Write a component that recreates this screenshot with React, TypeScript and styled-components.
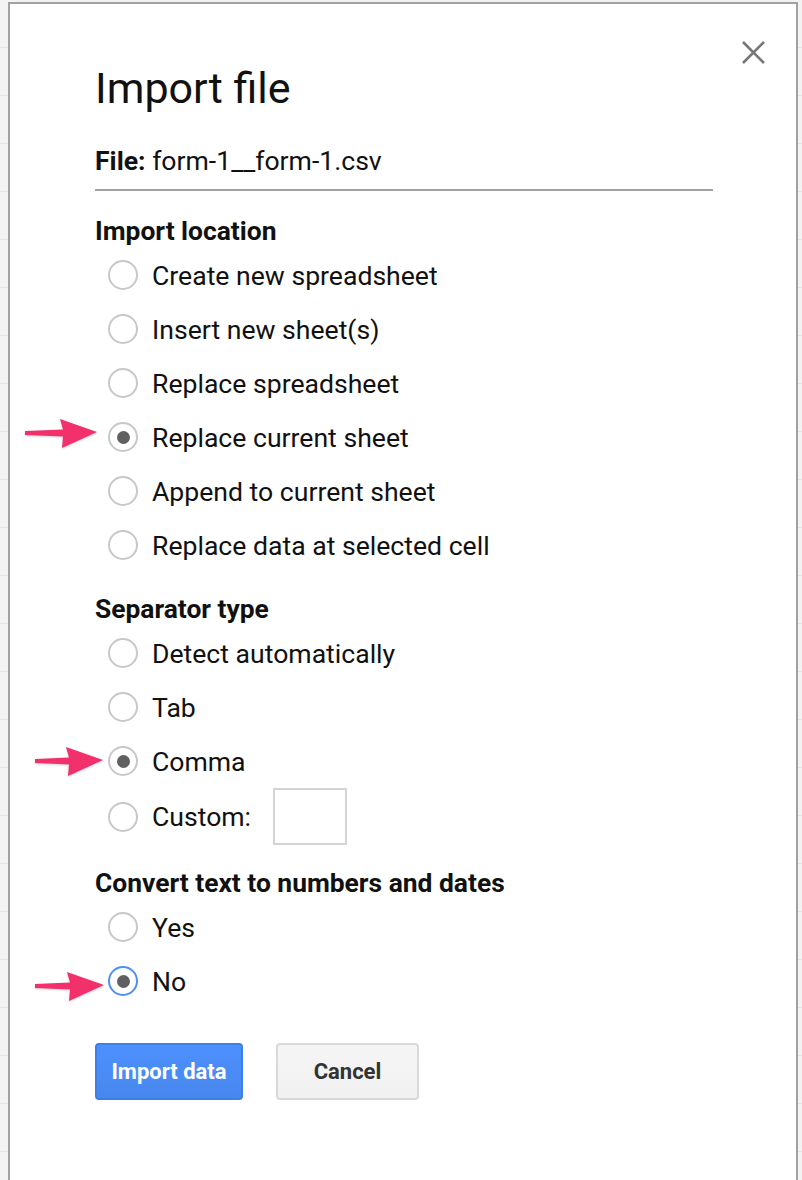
import React, { useState } from "react";
import styled, { createGlobalStyle } from "styled-components";

const GlobalStyle = createGlobalStyle`
  html, body {
    margin: 0;
    padding: 0;
  }
  body {
    background-color: #f3f3f3;
    background-image: repeating-linear-gradient(
      to bottom,
      transparent 0,
      transparent 47px,
      #e3e3e3 47px,
      #e3e3e3 48px
    );
    font-family: Roboto, "Liberation Sans", Arial, sans-serif;
    color: #111;
    overflow: hidden;
  }
`;

const Page = styled.div`
  height: 1180px;
  padding: 2px 4px 0 8px;
  box-sizing: border-box;
`;

const Dialog = styled.div`
  position: relative;
  width: 790px;
  min-height: 1180px;
  box-sizing: border-box;
  background: #fff;
  border: 2px solid #a2a2a2;
  border-bottom: none;
  padding: 60px 0 0 85px;
`;

const CloseButton = styled.button`
  position: absolute;
  top: 37px;
  right: 31px;
  width: 23px;
  height: 23px;
  padding: 0;
  border: none;
  background: none;
  cursor: pointer;
`;

const Title = styled.h1`
  margin: 0;
  font-size: 43px;
  line-height: 48px;
  font-weight: 400;
  color: #111;
`;

const FileLine = styled.div`
  margin-top: 34px;
  width: 618px;
  font-size: 26.6px;
  line-height: 30px;
  padding-bottom: 13px;
  border-bottom: 2px solid #a2a2a2;
  b {
    font-weight: 700;
  }
`;

const SectionTitle = styled.div<{ $gap: number }>`
  margin-top: ${(p) => p.$gap}px;
  margin-bottom: 2px;
  font-size: 26.4px;
  line-height: 30px;
  font-weight: 700;
`;

const Row = styled.label`
  position: relative;
  display: flex;
  align-items: center;
  min-height: 54px;
  padding-left: 13px;
  gap: 14px;
  font-size: 26.6px;
  cursor: pointer;
`;

const Circle = styled.span<{ $checked: boolean; $focused?: boolean }>`
  width: 30px;
  height: 30px;
  box-sizing: border-box;
  border-radius: 50%;
  border: 2px solid ${(p) => (p.$focused ? "#4d8ff5" : "#c8c8c8")};
  display: grid;
  place-items: center;
  flex-shrink: 0;
  &::after {
    content: "";
    width: 13px;
    height: 13px;
    border-radius: 50%;
    background: #606060;
    display: ${(p) => (p.$checked ? "block" : "none")};
  }
`;

const CustomBox = styled.input`
  margin-left: 8px;
  width: 74px;
  height: 57px;
  box-sizing: border-box;
  border: 2px solid #d4d4d4;
  outline: none;
`;

const ArrowMark = styled.svg<{ $left: number; $top: number }>`
  position: absolute;
  left: ${(p) => p.$left}px;
  top: ${(p) => p.$top}px;
  filter: drop-shadow(0 1px 1px rgba(0, 0, 0, 0.18));
`;

const Buttons = styled.div`
  display: flex;
  gap: 33px;
  margin-top: 35px;
`;

const Button = styled.button<{ $primary?: boolean }>`
  height: 57px;
  width: ${(p) => (p.$primary ? 148 : 143)}px;
  border-radius: 4px;
  font-family: Roboto, "Liberation Sans", Arial, sans-serif;
  font-size: 22px;
  font-weight: 700;
  cursor: pointer;
  border: 2px solid ${(p) => (p.$primary ? "#3b7fe8" : "#d9d9d9")};
  background: ${(p) =>
    p.$primary
      ? "linear-gradient(#4d90fe, #4787ed)"
      : "linear-gradient(#f5f5f5, #f1f1f1)"};
  color: ${(p) => (p.$primary ? "#fff" : "#333")};
`;

const Arrow = ({ left, top, w }: { left: number; top: number; w: number }) => (
  <ArrowMark $left={left} $top={top} width={w} height="30" viewBox={`0 0 ${w} 30`}>
    <path
      d={`M0 12 L${w - 34} 10.5 L${w - 37} 0 L${w} 13 L${w - 35} 29 L${w - 34} 17.5 L0 16 Z`}
      fill="#f2306b"
    />
  </ArrowMark>
);

type Opt = { label: string; arrow?: { left: number; top: number; w: number } };

const locations: Opt[] = [
  { label: "Create new spreadsheet" },
  { label: "Insert new sheet(s)" },
  { label: "Replace spreadsheet" },
  { label: "Replace current sheet", arrow: { left: -70, top: 9, w: 72 } },
  { label: "Append to current sheet" },
  { label: "Replace data at selected cell" },
];

const separators: Opt[] = [
  { label: "Detect automatically" },
  { label: "Tab" },
  { label: "Comma", arrow: { left: -60, top: 13, w: 68 } },
];

const converts: Opt[] = [
  { label: "Yes" },
  { label: "No", arrow: { left: -60, top: 18, w: 69 } },
];

export default function App() {
  const [location, setLocation] = useState("Replace current sheet");
  const [separator, setSeparator] = useState("Comma");
  const [convert, setConvert] = useState("No");

  const renderRows = (opts: Opt[], value: string, set: (v: string) => void, focused?: boolean) =>
    opts.map((o) => (
      <Row key={o.label} onClick={() => set(o.label)}>
        {o.arrow && <Arrow {...o.arrow} />}
        <Circle $checked={value === o.label} $focused={focused && value === o.label} />
        {o.label}
      </Row>
    ));

  return (
    <>
      <GlobalStyle />
      <Page>
        <Dialog>
          <CloseButton aria-label="Close">
            <svg width="23" height="23" viewBox="0 0 23 23">
              <path d="M1 1 L22 22 M22 1 L1 22" stroke="#777" strokeWidth="2.6" />
            </svg>
          </CloseButton>
          <Title>Import file</Title>
          <FileLine>
            <b>File:</b> form-1__form-1.csv
          </FileLine>

          <SectionTitle $gap={25}>Import location</SectionTitle>
          {renderRows(locations, location, setLocation)}

          <SectionTitle $gap={22}>Separator type</SectionTitle>
          {renderRows(separators, separator, setSeparator)}
          <Row onClick={() => setSeparator("Custom")}>
            <Circle $checked={separator === "Custom"} />
            Custom:
            <CustomBox type="text" />
          </Row>

          <SectionTitle $gap={23}>Convert text to numbers and dates</SectionTitle>
          {renderRows(converts, convert, setConvert, true)}

          <Buttons>
            <Button $primary>Import data</Button>
            <Button>Cancel</Button>
          </Buttons>
        </Dialog>
      </Page>
    </>
  );
}
